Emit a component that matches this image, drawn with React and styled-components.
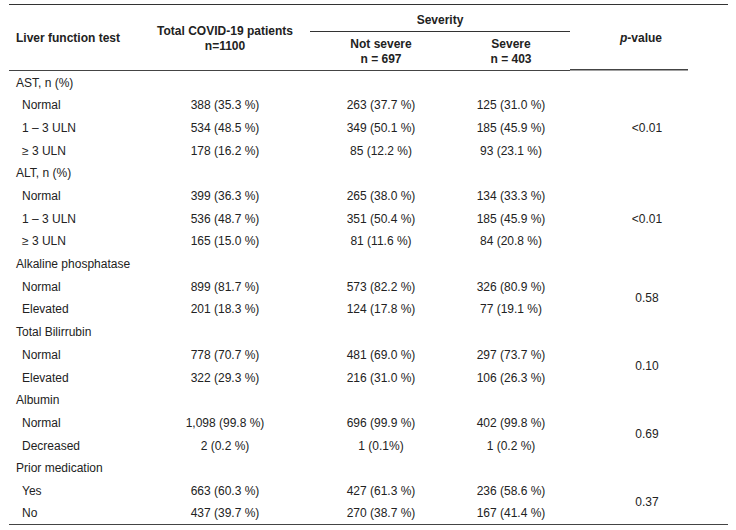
import React from "react";
import styled, { createGlobalStyle } from "styled-components";

const GlobalStyle = createGlobalStyle`
    body {
        margin: 0;
        background: #ffffff;
        font-family: "Liberation Sans", Arial, sans-serif;
    }
`;

const groups = [
    {
        title: "AST, n (%)",
        p: "<0.01",
        rows: [
            ["Normal", "388 (35.3 %)", "263 (37.7 %)", "125 (31.0 %)"],
            ["1 \u2013 3 ULN", "534 (48.5 %)", "349 (50.1 %)", "185 (45.9 %)"],
            ["\u2265 3 ULN", "178 (16.2 %)", "85 (12.2 %)", "93 (23.1 %)"],
        ],
    },
    {
        title: "ALT, n (%)",
        p: "<0.01",
        rows: [
            ["Normal", "399 (36.3 %)", "265 (38.0 %)", "134 (33.3 %)"],
            ["1 \u2013 3 ULN", "536 (48.7 %)", "351 (50.4 %)", "185 (45.9 %)"],
            ["\u2265 3 ULN", "165 (15.0 %)", "81 (11.6 %)", "84 (20.8 %)"],
        ],
    },
    {
        title: "Alkaline phosphatase",
        p: "0.58",
        rows: [
            ["Normal", "899 (81.7 %)", "573 (82.2 %)", "326 (80.9 %)"],
            ["Elevated", "201 (18.3 %)", "124 (17.8 %)", "77 (19.1 %)"],
        ],
    },
    {
        title: "Total Bilirrubin",
        p: "0.10",
        rows: [
            ["Normal", "778 (70.7 %)", "481 (69.0 %)", "297 (73.7 %)"],
            ["Elevated", "322 (29.3 %)", "216 (31.0 %)", "106 (26.3 %)"],
        ],
    },
    {
        title: "Albumin",
        p: "0.69",
        rows: [
            ["Normal", "1,098 (99.8 %)", "696 (99.9 %)", "402 (99.8 %)"],
            ["Decreased", "2 (0.2 %)", "1 (0.1%)", "1 (0.2 %)"],
        ],
    },
    {
        title: "Prior medication",
        p: "0.37",
        rows: [
            ["Yes", "663 (60.3 %)", "427 (61.3 %)", "236 (58.6 %)"],
            ["No", "437 (39.7 %)", "270 (38.7 %)", "167 (41.4 %)"],
        ],
    },
];

const App = () => {
    return (
        <Wrapper>
            <GlobalStyle />
            <Table>
                <colgroup>
                    <col style={{ width: 131 }} />
                    <col style={{ width: 170 }} />
                    <col style={{ width: 142 }} />
                    <col style={{ width: 118 }} />
                    <col style={{ width: 158 }} />
                </colgroup>
                <thead>
                    <HeadRow $h={26.5}>
                        <HeadCell rowSpan={2} $align="left" $ruled>
                            Liver function test
                        </HeadCell>
                        <HeadCell rowSpan={2} $ruled>
                            Total COVID-19 patients
                            <br />
                            n=1100
                        </HeadCell>
                        <SpanCell colSpan={2}>Severity</SpanCell>
                        <PCell rowSpan={2}>
                            <i>p</i>-value
                        </PCell>
                    </HeadRow>
                    <HeadRow $h={39.5}>
                        <HeadCell $ruled>
                            Not severe
                            <br />
                            n = 697
                        </HeadCell>
                        <HeadCell $ruled>
                            Severe
                            <br />
                            n = 403
                        </HeadCell>
                    </HeadRow>
                </thead>
                <tbody>
                    {groups.map((g) => (
                        <React.Fragment key={g.title}>
                            <Row>
                                <Cell $align="left" $indent={7}>
                                    {g.title}
                                </Cell>
                                <Cell />
                                <Cell />
                                <Cell />
                                <Cell />
                            </Row>
                            {g.rows.map((r, i) => (
                                <Row key={r[0]}>
                                    <Cell $align="left" $indent={13}>
                                        {r[0]}
                                    </Cell>
                                    <Cell>{r[1]}</Cell>
                                    <Cell>{r[2]}</Cell>
                                    <Cell>{r[3]}</Cell>
                                    {i === 0 && (
                                        <Cell rowSpan={g.rows.length} $right={4}>
                                            {g.p}
                                        </Cell>
                                    )}
                                </Row>
                            ))}
                        </React.Fragment>
                    ))}
                </tbody>
            </Table>
        </Wrapper>
    );
};

const Wrapper = styled.div`
    padding: 4px 8px 5px 9px;
    color: #222;
`;

const Table = styled.table`
    width: 719px;
    table-layout: fixed;
    border-collapse: collapse;
    border-top: 1px solid #333;
    border-bottom: 1.5px solid #444;
    font-size: 12px;
`;

const HeadRow = styled.tr`
    height: ${(p) => p.$h}px;
`;

const HeadCell = styled.th`
    padding: 2px 0 0 ${(p) => (p.$align === "left" ? 7 : 0)}px;
    text-align: ${(p) => p.$align || "center"};
    vertical-align: middle;
    font-weight: bold;
    line-height: 15px;
    color: #222;
    border-bottom: ${(p) => (p.$ruled ? "1.5px solid #444" : "none")};
`;

const SpanCell = styled.th`
    padding: 5px 0 0 0;
    font-weight: bold;
    line-height: 15px;
    text-align: center;
    vertical-align: middle;
    color: #222;
    border-bottom: 1px solid #333;
`;

const PCell = styled.th`
    padding: 2px 16px 0 0;
    font-weight: bold;
    line-height: 15px;
    text-align: center;
    vertical-align: middle;
    color: #222;
    background: linear-gradient(#444, #444) left bottom / 118px 1.5px no-repeat;

    i {
        font-style: italic;
    }
`;

const Row = styled.tr`
    height: 22.7px;
`;

const Cell = styled.td`
    padding: 2.5px ${(p) => p.$right || 0}px 0 ${(p) => p.$indent || 0}px;
    text-align: ${(p) => p.$align || "center"};
    vertical-align: middle;
    white-space: nowrap;
    line-height: 15px;
`;

export default App;
